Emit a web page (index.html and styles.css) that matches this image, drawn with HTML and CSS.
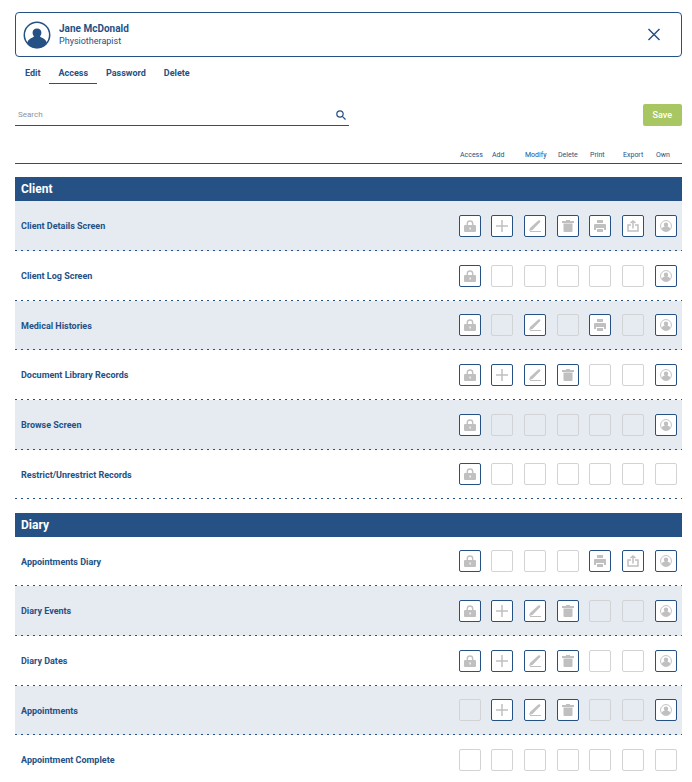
FILE: index.html
```html
<!DOCTYPE html>
<html lang="en">
<head>
    <meta charset="UTF-8">
    <meta name="viewport" content="width=device-width, initial-scale=1.0">
    <title>User Access</title>
    <link rel="stylesheet" href="styles.css">
</head>
<body>
    <svg class="icon-defs" aria-hidden="true">
        <symbol id="icon-access" viewBox="0 0 24 24">
            <path d="M6.500 11V7.500a5.500 5.500 0 0 1 11 0V11" fill="none" stroke="currentColor" stroke-width="2.800"/>
            <path fill-rule="evenodd" d="M2 10h20a2 2 0 0 1 2 2v10a2 2 0 0 1-2 2H2a2 2 0 0 1-2-2V12a2 2 0 0 1 2-2zM11 15v4h2.500v-4z"/>
        </symbol>
        <symbol id="icon-add" viewBox="0 0 24 24">
            <path d="M10.500 0h3v10.500H24v3H13.500V24h-3V13.500H0v-3h10.500z"/>
        </symbol>
        <symbol id="icon-modify" viewBox="0 0 24 24">
            <path d="M0 22l2-6L18.500 1q2-1.500 3.500 0t0 3.500L7 20z"/>
            <path d="M2 23h22" stroke="currentColor" stroke-width="2"/>
        </symbol>
        <symbol id="icon-delete" viewBox="0 0 24 24">
            <path d="M0 2h8V0h8v2h8v4H0zM3 7h18v15a2 2 0 0 1-2 2H5a2 2 0 0 1-2-2z"/>
        </symbol>
        <symbol id="icon-print" viewBox="0 0 24 24">
            <path d="M6 0h12v6H6zM2 8h20a2 2 0 0 1 2 2v10h-4v-4H4v4H0V10a2 2 0 0 1 2-2zM6 18h12v6H6z"/>
        </symbol>
        <symbol id="icon-export" viewBox="0 0 24 24">
            <path d="M8 10H2v12h20V10h-6M12 17V3M7 6l5-4 5 4" fill="none" stroke="currentColor" stroke-width="3"/>
        </symbol>
        <symbol id="icon-own" viewBox="0 0 28 28">
            <circle cx="14" cy="14" r="12.700" fill="none" stroke="currentColor" stroke-width="2.200"/>
            <path d="M14 6c3 0 5 2 5 5 0 1.700-.6 2.800-1.500 3.700.4 1.500 2 1.500 3.700 2.500 1.600 1 2.300 2.600 2.800 5a13 13 0 0 1-20 0c.5-2.400 1.200-4 2.800-5 1.700-1 3.300-1 3.700-2.500C9.600 13.800 9 12.700 9 11c0-3 2-5 5-5z"/>
        </symbol>
    </svg>

    <header class="user-card">
        <svg class="avatar" viewBox="0 0 28 28" aria-hidden="true">
            <circle cx="14" cy="14" r="12.700" fill="none" stroke="currentColor" stroke-width="1.500"/>
            <path d="M14 7.500c2.900 0 4.400 1.900 4.400 4.300 0 1.600-.6 2.700-1.400 3.500.2 1 1.500 1.200 3.100 2 2 1 3.300 2.800 4 5.200a13 13 0 0 1-20.200 0c.7-2.400 2-4.200 4-5.200 1.600-.8 2.900-1 3.100-2-.8-.8-1.400-1.900-1.400-3.500 0-2.400 1.500-4.300 4.400-4.300z"/>
        </svg>
        <div class="user-info">
            <h1>Jane McDonald</h1>
            <p>Physiotherapist</p>
        </div>
        <button class="close" type="button" aria-label="Close">
            <svg viewBox="0 0 14 14"><path d="M1.500 1l11 11M12.500 1l-11 11"/></svg>
        </button>
    </header>

    <nav class="tabs">
        <a href="#edit">Edit</a>
        <a href="#access" class="active">Access</a>
        <a href="#password">Password</a>
        <a href="#delete">Delete</a>
    </nav>

    <main>
        <div class="toolbar">
            <div class="search">
                <input type="search" aria-label="Search" placeholder="Search">
                <svg viewBox="0 0 10 10" aria-hidden="true"><circle cx="4" cy="4" r="3.200"/><path d="M6.300 6.300l3.200 3.200"/></svg>
            </div>
            <button class="save" type="button">Save</button>
        </div>

        <table class="permissions" id="permissions">
            <thead>
                <tr>
                    <th class="name"></th>
                    <th scope="col">Access</th>
                    <th scope="col">Add</th>
                    <th scope="col">Modify</th>
                    <th scope="col">Delete</th>
                    <th scope="col">Print</th>
                    <th scope="col">Export</th>
                    <th scope="col">Own</th>
                </tr>
            </thead>
        </table>
    </main>
    <script src="script.js"></script>
</body>
</html>
```
FILE: styles.css
```css
* {
    box-sizing: border-box;
}
body {
    margin: 0;
    padding: 12px 10px 0 15px;
    font-family: Roboto, sans-serif;
    font-size: 9px;
    color: #255185;
    background: white;
}
.icon-defs {
    display: none;
}
svg {
    fill: currentColor;
}
.user-card {
    display: flex;
    align-items: center;
    gap: 8px;
    height: 45px;
    padding: 0 20px 0 7px;
    border: 1px solid #255185;
    border-radius: 4px;
}
.avatar {
    width: 28px;
    height: 28px;
}
.user-info {
    flex: 1;
}
h1 {
    margin: 0;
    font-size: 10px;
    line-height: 12px;
}
.user-info p {
    margin: 0;
    line-height: 12px;
}
.close {
    display: flex;
    padding: 0;
    border: none;
    background: none;
    color: inherit;
    cursor: pointer;
}
.close svg {
    width: 14px;
    height: 14px;
    stroke: currentColor;
    stroke-width: 1.5;
}
.tabs {
    display: flex;
    margin-top: 6px;
    padding-left: 1px;
}
.tabs a {
    padding: 0 9px;
    line-height: 20px;
    font-weight: 700;
    color: inherit;
    text-decoration: none;
    border-bottom: 1px solid transparent;
}
.tabs a.active {
    border-color: #255185;
}
.toolbar {
    display: flex;
    justify-content: space-between;
    margin-top: 20px;
}
.search {
    display: flex;
    align-items: center;
    width: 50%;
    height: 22px;
    padding: 0 3px;
    border-bottom: 1px solid #255185;
}
.search input {
    flex: 1;
    min-width: 0;
    padding: 0;
    border: none;
    outline: none;
    background: none;
    font: 8px Roboto, sans-serif;
    color: #255185;
}
.search input::placeholder {
    color: #8b93a0;
}
.search svg {
    width: 10px;
    height: 10px;
    fill: none;
    stroke: currentColor;
    stroke-width: 1.2;
}
.save {
    padding: 0 10px;
    height: 22px;
    border: none;
    border-radius: 2px;
    background: #a8c762;
    color: white;
    font: 500 9px Roboto, sans-serif;
    cursor: pointer;
}
.permissions {
    width: 100%;
    margin-top: 20px;
    table-layout: fixed;
    border-collapse: separate;
    border-spacing: 0;
}
th,
td {
    padding: 0;
    text-align: left;
}
thead th {
    width: 33px;
    height: 18px;
    padding: 1px 0 0 6px;
    font-size: 7px;
    font-weight: 400;
    border-bottom: 1px solid #255185;
}
thead th:nth-child(3n+2) {
    width: 32px;
}
thead th.name {
    width: auto;
}
.section-title {
    padding-top: 14px;
}
.section:first-of-type .section-title {
    padding-top: 13px;
}
.section-title span {
    display: block;
    padding: 0 6px;
    font-size: 12px;
    line-height: 24px;
    color: white;
    background: #255185;
}
.permission {
    height: 50px;
    background: repeating-linear-gradient(90deg, #255185 0 2px, transparent 2px 6px) left bottom / 100% 1px no-repeat;
}
.section:nth-of-type(odd) .permission:nth-child(3n+1),
.section:nth-of-type(even) .permission:nth-child(3n+2) {
    height: 49px;
}
.section:nth-of-type(odd) .permission:nth-child(even),
.section:nth-of-type(even) .permission:nth-child(odd) {
    background-color: #e6ebf2;
}
.permission th {
    padding-left: 6px;
}
.permission td {
    padding: 0 0 1px 5px;
}
.toggle {
    display: grid;
    place-items: center;
    width: 22px;
    height: 22px;
    color: #c0c0c0;
    cursor: pointer;
}
.toggle input,
.toggle svg {
    grid-area: 1 / 1;
}
.toggle input {
    appearance: none;
    width: 22px;
    height: 22px;
    margin: 0;
    border: 1px solid #d2d3d5;
    border-radius: 2px;
}
.toggle input:checked {
    border-color: #255185;
    background: white;
}
.toggle svg {
    z-index: 1;
    width: 12px;
    height: 12px;
    visibility: hidden;
}
.toggle input:checked + svg {
    visibility: visible;
}
```
FILE: script.js
```js
const actions = ['access', 'add', 'modify', 'delete', 'print', 'export', 'own'];

const sections = {
    'Client': {
        'Client Details Screen': actions,
        'Client Log Screen': ['access', 'own'],
        'Medical Histories': ['access', 'modify', 'print', 'own'],
        'Document Library Records': ['access', 'add', 'modify', 'delete', 'own'],
        'Browse Screen': ['access', 'own'],
        'Restrict/Unrestrict Records': ['access']
    },
    'Diary': {
        'Appointments Diary': ['access', 'print', 'export', 'own'],
        'Diary Events': ['access', 'add', 'modify', 'delete', 'own'],
        'Diary Dates': ['access', 'add', 'modify', 'delete', 'own'],
        'Appointments': ['add', 'modify', 'delete', 'own'],
        'Appointment Complete': []
    }
};

function toggleCell(name, action, allowed) {
    return `
        <td>
            <label class="toggle">
                <input type="checkbox" aria-label="${name}: ${action}" ${allowed.includes(action) ? 'checked' : ''}>
                <svg aria-hidden="true"><use href="#icon-${action}"/></svg>
            </label>
        </td>
    `;
}

const table = document.getElementById('permissions');

for (const [title, rows] of Object.entries(sections)) {
    const tbody = document.createElement('tbody');
    tbody.className = 'section';
    tbody.innerHTML = `<tr><th class="section-title" colspan="8"><span>${title}</span></th></tr>`;

    for (const [name, allowed] of Object.entries(rows)) {
        tbody.innerHTML += `
            <tr class="permission">
                <th scope="row">${name}</th>
                ${actions.map(action => toggleCell(name, action, allowed)).join('')}
            </tr>
        `;
    }
    table.appendChild(tbody);
}
```
